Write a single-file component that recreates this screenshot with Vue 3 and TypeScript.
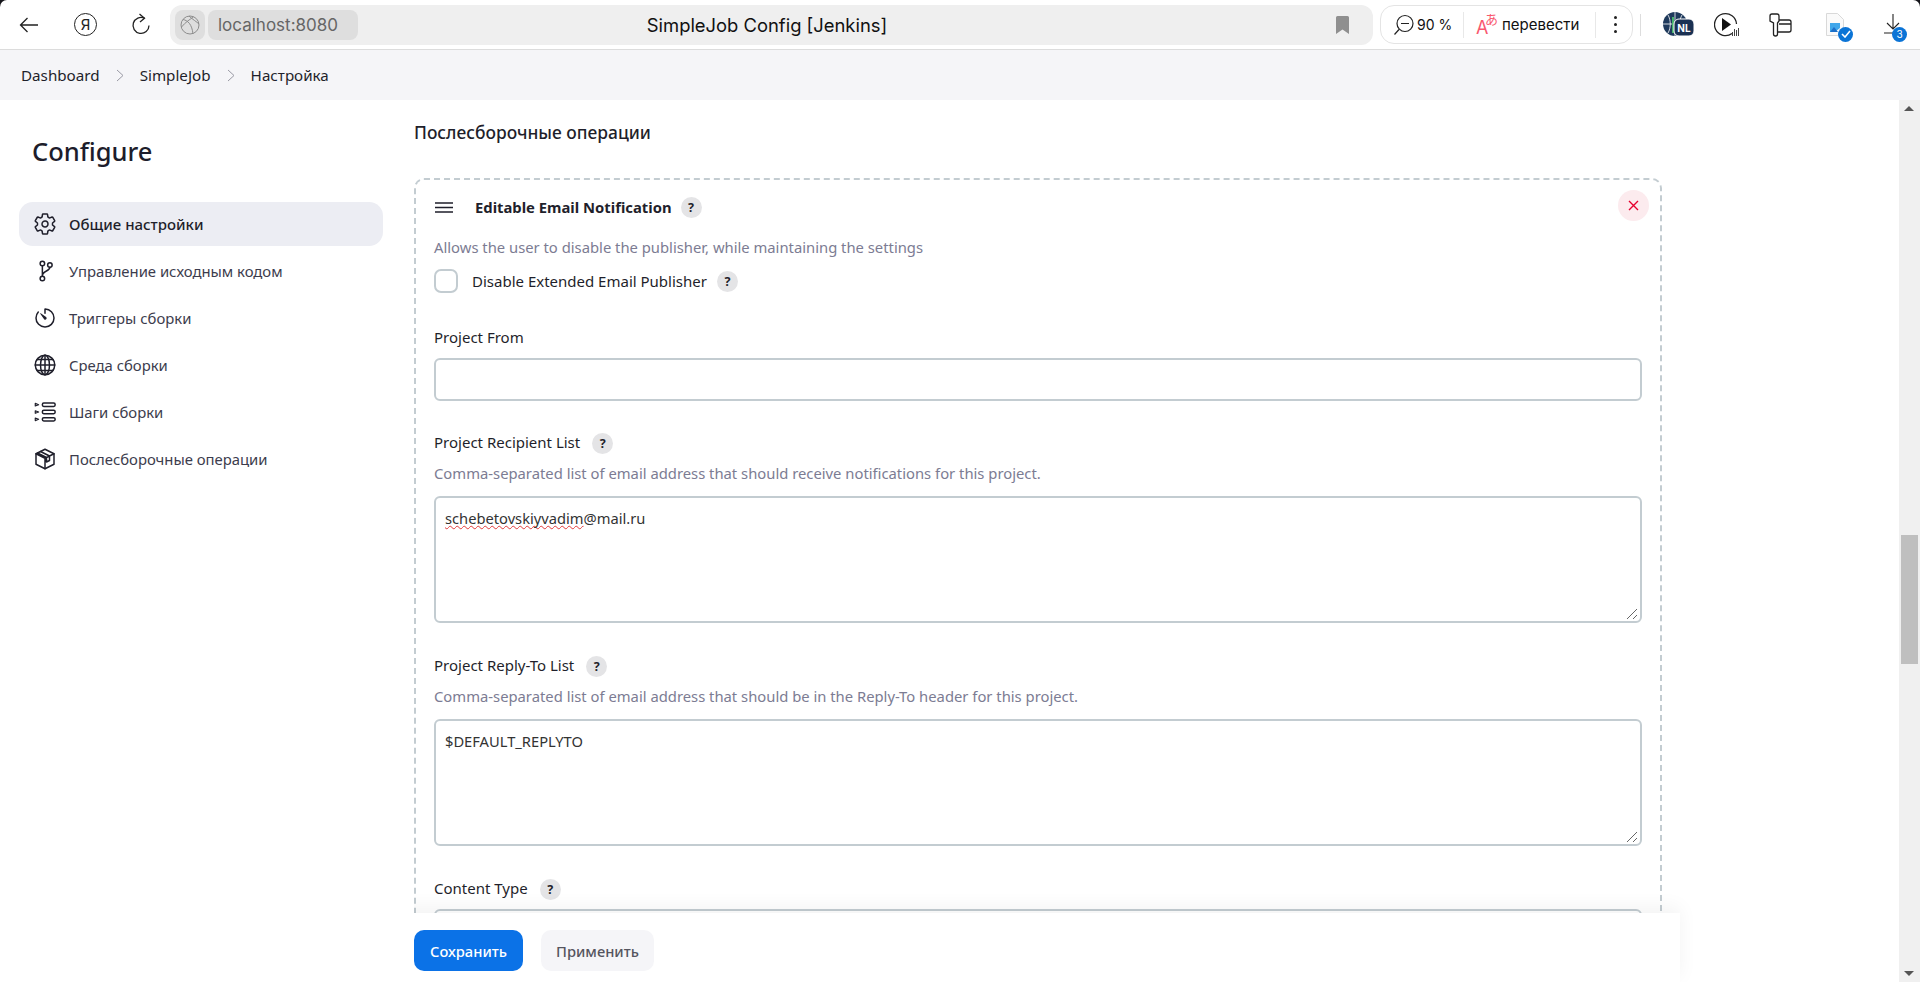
<script setup lang="ts">
interface NavItem { label: string; icon: string }
const nav: NavItem[] = [
  { label: 'Общие настройки', icon: 'gear' },
  { label: 'Управление исходным кодом', icon: 'branch' },
  { label: 'Триггеры сборки', icon: 'timer' },
  { label: 'Среда сборки', icon: 'globe' },
  { label: 'Шаги сборки', icon: 'steps' },
  { label: 'Послесборочные операции', icon: 'box' },
]
const crumbs = ['Dashboard', 'SimpleJob', 'Настройка']
</script>

<template>
  <div class="app">
    <header class="chrome">
      <svg class="tb back" width="20" height="16" viewBox="0 0 20 16" fill="none" stroke="#222" stroke-width="1.3"><path d="M19 8H1.5M8.5 1L1.5 8l7 7"/></svg>
      <span class="ya">Я</span>
      <svg class="tb reload" width="20" height="24" viewBox="0 0 20 24" fill="none" stroke="#222" stroke-width="1.3"><path d="M13.5 5.2A8 8 0 1 0 18 12.5"/><path d="M8.5 1l5 4.2-4.5 3.8"/></svg>
      <div class="address">
        <span class="chip globe-chip">
          <svg width="20" height="20" viewBox="0 0 20 20" fill="none" stroke="#8d8d8d" stroke-width="1"><circle cx="10" cy="10" r="9"/><path d="M3 4.5c5 1 9 5 10 14.500M1.500 12c4-5 9-8 12-10M9 1c3 3 8 6 10 8"/></svg>
        </span>
        <span class="chip host">localhost:8080</span>
        <span class="title">SimpleJob Config [Jenkins]</span>
        <svg class="bookmark" width="13" height="18" viewBox="0 0 13 18"><path d="M0 1.500A1.500 1.500 0 0 1 1.500 0h10A1.500 1.500 0 0 1 13 1.500V18l-6.500-4.500L0 18z" fill="#8f8f8f"/></svg>
      </div>
      <div class="pill">
        <svg width="22" height="24" viewBox="0 0 22 24" fill="none" stroke="#222" stroke-width="1.2"><circle cx="12" cy="10.500" r="8"/><path d="M8 10.500h8M6 16.500l-4.500 5"/></svg>
        <span class="zoomval">90 %</span>
        <i class="div"></i>
        <span class="tr"><b class="tr-a">A</b><b class="tr-j">あ</b></span>
        <span class="trans">перевести</span>
        <i class="div"></i>
        <span class="dots"><i></i><i></i><i></i></span>
      </div>
      <i class="sep"></i>
      <div class="ext">
        <svg class="e-nl" width="31" height="26" viewBox="0 0 31 26">
          <circle cx="12" cy="12" r="12" fill="#1f3a5c"/>
          <path d="M0 12h24M12 0v24M5 3c3 5 3 13 0 18M19 3c-3 5-3 13 0 18" stroke="#fff" stroke-width=".8" fill="none"/>
          <path d="M10 5v16" stroke="#45b36b" stroke-width="2"/>
          <rect x="11" y="7" width="20" height="17" rx="5" fill="#1b3153" stroke="#fff"/>
          <text x="21" y="20" text-anchor="middle" font-family="Inter, sans-serif" font-size="10" font-weight="700" fill="#fff">NL</text>
        </svg>
        <svg class="e-play" width="25" height="25" viewBox="0 0 25 25" fill="none">
          <path d="M18 21.500A11 11 0 1 1 22.500 12" stroke="#222" stroke-width="1.300"/>
          <path d="M8 6l9 6.500-9 6.500z" fill="#111"/>
          <path d="M18.500 24v-4M20.500 24v-7M22.500 24v-6M24.500 24v-8" stroke="#444" stroke-width="1"/>
        </svg>
        <svg class="e-key" width="23" height="24" viewBox="0 0 23 24" fill="none" stroke="#222" stroke-width="1.300">
          <path d="M1 3a2 2 0 0 1 2-2h5a2 2 0 0 1 2 2v5l-1.500 2v11a2 2 0 0 1-4 0V10L1 8z"/>
          <path d="M10 7h10a2 2 0 0 1 2 2v8a2 2 0 0 1-2 2h-11M10 11h12"/>
        </svg>
        <span class="file">
          <svg width="18" height="24" viewBox="0 0 18 24"><path d="M.5.5h11l6 6v16H.5z" fill="#fafafa" stroke="#d9d9d9"/><path d="M4 19V10h10v5l-5 4z" fill="#3fa6ea"/><path d="M4 19l4-5 4 5z" fill="#1b6fc9"/></svg>
          <span class="badge chk"><svg width="10" height="8" viewBox="0 0 10 8" fill="none" stroke="#fff" stroke-width="1.600"><path d="M1 4l3 3 5-6"/></svg></span>
        </span>
        <span class="file dl">
          <svg width="24" height="24" viewBox="0 0 24 24" fill="none" stroke="#222" stroke-width="1.100"><path d="M10 1v15M4 10l6 6 6-6M1 20h10"/></svg>
          <span class="badge num">3</span>
        </span>
      </div>
    </header>

    <nav class="crumbs">
      <template v-for="(c, i) in crumbs" :key="c">
        <svg v-if="i" class="chev" width="8" height="13" viewBox="0 0 8 13" fill="none" stroke="#9a9aa5" stroke-width="1"><path d="M1 1l6 5.500-6 5.500"/></svg>
        <span>{{ c }}</span>
      </template>
    </nav>

    <div class="body">
      <aside class="side">
        <h1>Configure</h1>
        <ul>
          <li v-for="(n, i) in nav" :key="n.label" :class="{ active: i === 0 }">
            <svg class="ic" width="24" height="24" viewBox="0 0 512 512" fill="none" stroke="#1f1f2b" stroke-width="32" stroke-linecap="round" stroke-linejoin="round">
              <path v-if="n.icon === 'gear'" d="M262.290 192.310a64 64 0 1057.400 57.400 64.130 64.130 0 00-57.400-57.400zM416.390 256a154.340 154.340 0 01-1.530 20.790l45.210 35.460a10.810 10.810 0 012.450 13.750l-42.770 74a10.810 10.810 0 01-13.140 4.590l-44.900-18.080a16.110 16.110 0 00-15.170 1.750A164.480 164.480 0 01325 400.800a15.940 15.940 0 00-8.820 12.140l-6.730 47.890a11.080 11.080 0 01-10.680 9.170h-85.540a11.110 11.110 0 01-10.690-8.870l-6.720-47.820a16.070 16.070 0 00-9-12.220 155.300 155.300 0 01-21.460-12.570 16 16 0 00-15.110-1.710l-44.890 18.070a10.810 10.810 0 01-13.140-4.580l-42.770-74a10.800 10.800 0 012.450-13.750l38.210-30a16.050 16.050 0 006-14.080c-.36-4.170-.58-8.330-.58-12.500s.21-8.270.58-12.350a16 16 0 00-6.070-13.940l-38.190-30A10.810 10.810 0 0149.480 186l42.770-74a10.810 10.810 0 0113.140-4.590l44.900 18.080a16.110 16.110 0 0015.170-1.750A164.480 164.480 0 01187 111.200a15.940 15.940 0 008.820-12.140l6.730-47.890A11.080 11.080 0 01213.230 42h85.540a11.110 11.110 0 0110.690 8.870l6.720 47.820a16.070 16.070 0 009 12.220 155.300 155.300 0 0121.460 12.570 16 16 0 0015.110 1.710l44.890-18.070a10.810 10.810 0 0113.140 4.580l42.770 74a10.800 10.800 0 01-2.450 13.750l-38.210 30a16.050 16.050 0 00-6.100 14.080c.33 4.140.55 8.300.55 12.470z"/>
              <g v-else-if="n.icon === 'branch'">
                <circle cx="200" cy="96" r="48"/><circle cx="200" cy="416" r="48"/><circle cx="360" cy="128" r="48"/>
                <path d="M200 144v224M360 176c0 90-160 70-160 180"/>
              </g>
              <g v-else-if="n.icon === 'timer'">
                <path d="M112.910 128A191.850 191.850 0 0064 254c-1.180 106.350 85.650 193.800 192 194 106.200.2 192-85.830 192-192 0-104.540-83.550-189.610-187.500-192a4.360 4.360 0 00-4.500 4.370V152"/>
                <path d="M233.380 278.630l-79-113a8.130 8.130 0 0111.320-11.320l113 79a32.500 32.500 0 01-37 53.340 33.210 33.210 0 01-8.320-8.020z" fill="#1f1f2b" stroke="none"/>
              </g>
              <g v-else-if="n.icon === 'globe'">
                <circle cx="256" cy="256" r="208"/>
                <ellipse cx="256" cy="256" rx="96" ry="208"/>
                <path d="M256 48v416M48 256h416M84 140h344M84 372h344"/>
              </g>
              <g v-else-if="n.icon === 'steps'">
                <rect x="200" y="64" width="272" height="72" rx="30"/><rect x="200" y="220" width="272" height="72" rx="30"/><rect x="200" y="376" width="272" height="72" rx="30"/>
                <path d="M48 72l72 28-72 28zM48 228l72 28-72 28zM48 384l72 28-72 28z" stroke-width="24"/>
              </g>
              <g v-else>
                <path d="M256 48l192 96v224L256 464 64 368V144z"/>
                <path d="M64 144l192 96 192-96M256 240v224M160 96l192 96v96l-64 32v-96L96 128"/>
              </g>
            </svg>
            <span>{{ n.label }}</span>
          </li>
        </ul>
      </aside>

      <main class="main">
        <h2>Послесборочные операции</h2>
        <section class="box">
          <div class="box-head">
            <svg class="grip" width="18" height="11" viewBox="0 0 18 11" fill="none" stroke="#1f1f2b" stroke-width="1.500"><path d="M0 1h18M0 5.500h18M0 10h18"/></svg>
            <strong>Editable Email Notification</strong>
            <span class="help">?</span>
            <button class="close" type="button">
              <svg width="11" height="11" viewBox="0 0 11 11" fill="none" stroke="#e6002e" stroke-width="1.400"><path d="M1 1l9 9M10 1l-9 9"/></svg>
            </button>
          </div>
          <p class="desc first">Allows the user to disable the publisher, while maintaining the settings</p>
          <div class="check">
            <span class="cb"></span>
            <span>Disable Extended Email Publisher</span>
            <span class="help">?</span>
          </div>

          <div class="field from">
            <label>Project From</label>
            <div class="input"></div>
          </div>

          <div class="field">
            <label>Project Recipient List<span class="help">?</span></label>
            <p class="desc">Comma-separated list of email address that should receive notifications for this project.</p>
            <div class="area">
              <span class="typo">schebetovskiyvadim</span>@mail.ru
              <svg class="grab" width="14" height="14" viewBox="0 0 14 14" fill="none" stroke="#666" stroke-width="1"><path d="M2 13L12 3M8 13l4-4"/></svg>
            </div>
          </div>

          <div class="field">
            <label>Project Reply-To List<span class="help">?</span></label>
            <p class="desc">Comma-separated list of email address that should be in the Reply-To header for this project.</p>
            <div class="area">
              $DEFAULT_REPLYTO
              <svg class="grab" width="14" height="14" viewBox="0 0 14 14" fill="none" stroke="#666" stroke-width="1"><path d="M2 13L12 3M8 13l4-4"/></svg>
            </div>
          </div>

          <div class="field">
            <label>Content Type<span class="help">?</span></label>
            <div class="input"></div>
          </div>
        </section>

        <div class="sticker">
          <button class="btn primary" type="button">Сохранить</button>
          <button class="btn" type="button">Применить</button>
        </div>
      </main>

      <div class="scroll">
        <i class="up"></i>
        <i class="thumb"></i>
        <i class="down"></i>
      </div>
    </div>
  </div>
</template>

<style>
html, body { margin: 0; overflow: hidden; background: #fff; }
</style>

<style scoped>
.app {
  width: 1920px;
  height: 982px;
  display: flex;
  flex-direction: column;
  overflow: hidden;
  background: #15151a;
  font-family: "Noto Sans", "Liberation Sans", sans-serif;
  font-size: 15px;
  color: #1f1f2b;
}
.chrome {
  height: 49px;
  flex: none;
  display: flex;
  align-items: center;
  background: #fff;
  border-radius: 7px 7px 0 0;
  border-bottom: 1px solid #dcdcdc;
  padding-left: 19px;
  font-family: Inter, sans-serif;
}
.tb { flex: none; }
.back { margin-right: 35px; }
.ya {
  width: 23px;
  height: 23px;
  border: 1.3px solid #222;
  border-radius: 50%;
  display: flex;
  align-items: center;
  justify-content: center;
  box-sizing: border-box;
  font-size: 15px;
  margin-right: 34px;
  color: #222;
}
.reload { margin-right: 19px; }
.address {
  position: relative;
  width: 1203px;
  height: 40px;
  background: #efefef;
  border-radius: 12px;
  display: flex;
  align-items: center;
  padding: 0 5px;
  box-sizing: border-box;
  gap: 3px;
}
.chip {
  height: 30px;
  background: #dedede;
  border-radius: 8px;
  display: flex;
  align-items: center;
  justify-content: center;
}
.globe-chip { width: 30px; }
.host { width: 150px; box-sizing: border-box; justify-content: flex-start; padding-left: 10px; font-size: 17px; color: #666; }
.title {
  position: absolute;
  left: 476px;
  width: 242px;
  text-align: center;
  font-size: 18.400px;
  color: #111;
  white-space: nowrap;
}
.bookmark { margin-left: auto; margin-right: 19px; }
.pill {
  margin-left: 7px;
  width: 253px;
  height: 39px;
  box-sizing: border-box;
  border: 1px solid #e4e4e4;
  border-radius: 14px;
  display: flex;
  align-items: center;
  padding-left: 12px;
  font-size: 15px;
  color: #111;
}
.zoomval { margin-left: 2px; width: 39px; white-space: nowrap; font-size: 14px; }
.div { width: 1px; height: 26px; background: #e8e8e8; margin: 0 12px 0 7px; }
.tr { position: relative; width: 22px; height: 26px; margin-right: 4px; }
.tr-a { position: absolute; left: 0; top: 5px; font-size: 18px; font-weight: 400; color: #f9596f; }
.tr-j { position: absolute; left: 9px; top: -3px; font-size: 13px; font-weight: 400; color: #f9596f; font-family: "Noto Sans CJK JP", sans-serif; }
.trans { width: 81px; white-space: nowrap; }
.trans + .div { margin-left: 12px; margin-right: 18px; }
.dots { display: flex; flex-direction: column; gap: 4px; }
.dots i { width: 3px; height: 3px; border-radius: 50%; background: #222; }
.sep { width: 1px; height: 22px; background: #ddd; margin-left: 7px; }
.ext {
  display: flex;
  align-items: center;
  margin-left: 22px;
}
.e-play { margin-left: 20px; }
.e-key { margin-left: 30px; }
.file { position: relative; display: block; width: 24px; height: 24px; margin-left: 34px; }
.file.dl { margin-left: 33px; }
.badge {
  position: absolute;
  right: -3px;
  bottom: -5px;
  width: 15px;
  height: 15px;
  border-radius: 50%;
  background: #0b74d6;
  color: #fff;
  font-size: 10px;
  display: flex;
  align-items: center;
  justify-content: center;
}
.dl .badge { right: 0; }
.crumbs {
  height: 50px;
  flex: none;
  display: flex;
  align-items: center;
  gap: 16px;
  padding-left: 21px;
  background: #f5f5f8;
  font-size: 15.200px;
}
.body {
  flex: 1;
  min-height: 0;
  display: flex;
  background: #fff;
}
.side {
  width: 414px;
  flex: none;
  box-sizing: border-box;
  padding: 0 31px 0 19px;
}
.side h1 {
  margin: 32px 0 0 13px;
  font-size: 25.500px;
  line-height: 38px;
  font-weight: 500;
  color: #1d1d2b;
}
.side ul {
  list-style: none;
  margin: 32px 0 0;
  padding: 0;
  display: flex;
  flex-direction: column;
  gap: 3px;
  font-size: 14.850px;
}
.side li {
  height: 44px;
  display: flex;
  align-items: center;
  gap: 12px;
  padding-left: 14px;
  border-radius: 14px;
  color: #3c3c4d;
}
.side li.active { background: #ecedf3; font-size: 15px; font-weight: 500; color: #1f1f2b; }
.ic { flex: none; }
.main {
  position: relative;
  flex: 1;
  min-width: 0;
  overflow: hidden;
}
.main h2 {
  margin: 20px 0 0;
  font-size: 17.400px;
  line-height: 24px;
  font-weight: 500;
  color: #1f1f2b;
}
.box {
  width: 1248px;
  box-sizing: border-box;
  margin-top: 34px;
  border: 2px dashed #c3ccd1;
  border-radius: 10px;
  padding: 10px 18px 0;
}
.box-head {
  display: flex;
  align-items: center;
  height: 34px;
}
.grip { margin: 0 22px 0 1px; }
.box-head strong { font-weight: 700; font-size: 14.800px; }
.help {
  display: inline-flex;
  width: 21px;
  height: 21px;
  border-radius: 50%;
  background: #e4e4e6;
  align-items: center;
  justify-content: center;
  font-size: 12.500px;
  font-weight: 700;
  margin-left: 9px;
  vertical-align: middle;
}
.check .help { margin-left: 10px; }
.field label .help { margin-left: 12px; }
.close {
  margin-left: auto;
  margin-right: -7px;
  margin-top: -4px;
  width: 31px;
  height: 31px;
  padding: 0;
  border: 0;
  border-radius: 50%;
  background: #fcebee;
  display: flex;
  align-items: center;
  justify-content: center;
}
.desc {
  margin: 9px 0 13px;
  line-height: 20px;
  font-size: 14.800px;
  color: #7c7c93;
}
.desc.first { margin: 13px 0 13px; }
.check {
  display: flex;
  align-items: center;
  height: 24px;
  margin-top: -1px;
}
.cb {
  width: 24px;
  height: 24px;
  box-sizing: border-box;
  border: 2px solid #c3ccd1;
  border-radius: 7px;
  margin-right: 14px;
}
.field { margin-bottom: 32px; }
.field.from { margin-top: 34px; margin-bottom: 31px; }
.field label {
  display: block;
  height: 22px;
  line-height: 20px;
}
.input {
  margin-top: 9px;
  height: 43px;
  box-sizing: border-box;
  border: 2px solid #c3ccd1;
  border-radius: 6px;
}
.area {
  position: relative;
  height: 127px;
  box-sizing: border-box;
  border: 2px solid #c3ccd1;
  border-radius: 6px;
  padding: 10px 9px;
  line-height: 20px;
  font-size: 14.700px;
  color: #333;
}
.grab { position: absolute; right: 1px; bottom: 1px; }
.typo { text-decoration: underline wavy #e23a3a 1px; text-decoration-skip-ink: none; }
.sticker {
  position: absolute;
  left: -24px;
  right: 219px;
  top: 813px;
  height: 70px;
  background: #fff;
  box-shadow: 0 -6px 18px rgba(0, 0, 0, .05);
  display: flex;
  align-items: flex-start;
  gap: 18px;
  padding: 17px 0 0 24px;
  box-sizing: border-box;
}
.btn {
  width: 113px;
  height: 41px;
  border: 0;
  border-radius: 10px;
  background: #f5f5f8;
  font: 500 14.700px "Noto Sans", sans-serif;
  color: #55555f;
  padding: 0;
}
.btn.primary { width: 109px; background: #0b72e7; color: #fff; }
.scroll {
  position: relative;
  width: 21px;
  flex: none;
  background: #f0f0f0;
}
.scroll i { position: absolute; display: block; }
.up, .down {
  left: 5px;
  width: 0;
  height: 0;
  border-left: 5px solid transparent;
  border-right: 5px solid transparent;
}
.up { top: 6px; border-bottom: 5px solid #555; }
.down { bottom: 6px; border-top: 5px solid #555; }
.thumb { left: 2px; width: 17px; top: 435px; height: 129px; background: #bfbfbf; }
</style>
